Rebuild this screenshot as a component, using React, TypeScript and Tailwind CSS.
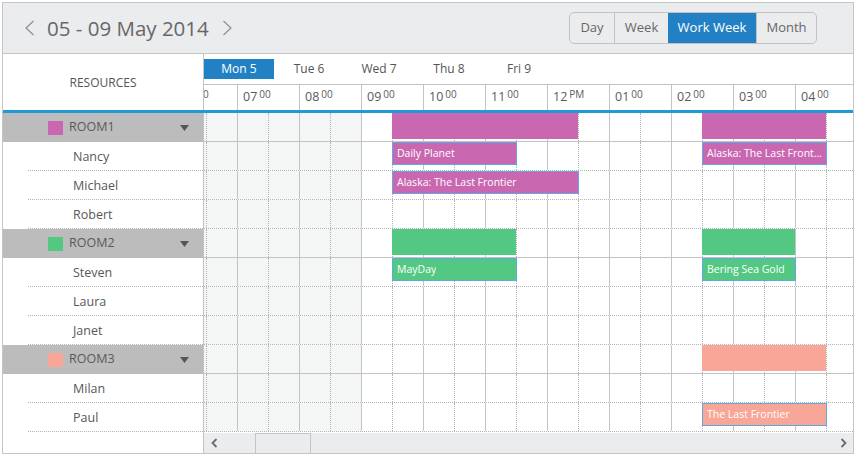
import React from "react";

type Ev = { left: number; width: number; title?: string };
type Row = { kind: "group" | "res"; name: string; color: string; events: Ev[] };

const PURPLE = "#c968b0";
const GREEN = "#53c883";
const SALMON = "#f7a697";

const rows: Row[] = [
  { kind: "group", name: "ROOM1", color: PURPLE, events: [{ left: 188, width: 186 }, { left: 498, width: 124 }] },
  { kind: "res", name: "Nancy", color: PURPLE, events: [{ left: 188, width: 125, title: "Daily Planet" }, { left: 498, width: 125, title: "Alaska: The Last Frontier" }] },
  { kind: "res", name: "Michael", color: PURPLE, events: [{ left: 188, width: 187, title: "Alaska: The Last Frontier" }] },
  { kind: "res", name: "Robert", color: PURPLE, events: [] },
  { kind: "group", name: "ROOM2", color: GREEN, events: [{ left: 188, width: 124 }, { left: 498, width: 93 }] },
  { kind: "res", name: "Steven", color: GREEN, events: [{ left: 188, width: 125, title: "MayDay" }, { left: 498, width: 94, title: "Bering Sea Gold" }] },
  { kind: "res", name: "Laura", color: GREEN, events: [] },
  { kind: "res", name: "Janet", color: GREEN, events: [] },
  { kind: "group", name: "ROOM3", color: SALMON, events: [{ left: 498, width: 124 }] },
  { kind: "res", name: "Milan", color: SALMON, events: [] },
  { kind: "res", name: "Paul", color: SALMON, events: [{ left: 498, width: 125, title: "The Last Frontier" }] },
];

const hours = [
  { h: "06", s: "00" },
  { h: "07", s: "00" },
  { h: "08", s: "00" },
  { h: "09", s: "00" },
  { h: "10", s: "00" },
  { h: "11", s: "00" },
  { h: "12", s: "PM" },
  { h: "01", s: "00" },
  { h: "02", s: "00" },
  { h: "03", s: "00" },
  { h: "04", s: "00" },
];

const days = ["Mon 5", "Tue 6", "Wed 7", "Thu 8", "Fri 9"];

function Chevron({ dir, size = "big" }: { dir: "l" | "r"; size?: "big" | "small" }) {
  if (size === "small") {
    return (
      <svg width="7" height="10" viewBox="0 0 7 10">
        <path d={dir === "l" ? "M5.5 1 L1.5 5 L5.5 9" : "M1.5 1 L5.5 5 L1.5 9"} fill="none" stroke="#6b6b6b" strokeWidth="1.8" />
      </svg>
    );
  }
  return (
    <svg width="11" height="16" viewBox="0 0 11 16">
      <path d={dir === "l" ? "M9.5 1 L2 8 L9.5 15" : "M1.5 1 L9 8 L1.5 15"} fill="none" stroke="#8e8e8e" strokeWidth="1.2" />
    </svg>
  );
}

function HourCell({ shaded }: { shaded: boolean }) {
  return (
    <div className={shaded ? "flex h-full w-[62px] shrink-0 bg-[#f4f6f5]" : "flex h-full w-[62px] shrink-0"}>
      <div className="h-full w-[31px] border-l border-[#c3c3c3]" />
      <div className="h-full w-[31px] border-l border-dotted border-[#b3b3b3]" />
    </div>
  );
}

function GridRow({ row }: { row: Row }) {
  return (
    <div
      className={
        row.kind === "group"
          ? "relative h-[29px] border-b border-[#c3c3c3]"
          : "relative h-[29px] border-b border-dotted border-[#b3b3b3]"
      }
    >
      <div className="-ml-[29px] flex h-full">
        {hours.map((_, i) => (
          <HourCell key={i} shaded={i < 3} />
        ))}
      </div>
      {row.events.map((ev, i) =>
        row.kind === "group" ? (
          <div
            key={i}
            className="absolute top-0 h-[26px]"
            style={{ left: ev.left, width: ev.width, background: row.color }}
          />
        ) : (
          <div
            key={i}
            className="absolute top-0 flex h-[23px] items-center truncate border border-[#5ea9e2] pl-[4px] pr-[3px] text-[10.5px] text-white"
            style={{ left: ev.left, width: ev.width, background: row.color }}
          >
            <span className="truncate">{ev.title}</span>
          </div>
        )
      )}
    </div>
  );
}

function ResourceRow({ row }: { row: Row }) {
  if (row.kind === "group") {
    return (
      <div className="flex h-[29px] items-center bg-[#bcbcbc] pl-[45px]">
        <div className="h-[14px] w-[15px]" style={{ background: row.color }} />
        <span className="ml-[6px] text-[12.5px] text-[#5a5a5a]">{row.name}</span>
        <svg className="ml-auto mr-[14px]" width="9" height="6" viewBox="0 0 9 6">
          <path d="M0 0 L9 0 L4.5 6 Z" fill="#555" />
        </svg>
      </div>
    );
  }
  return (
    <div className="ml-[25px] flex h-[29px] items-center border-b border-dotted border-[#b3b3b3] pl-[45px] pt-[2px] text-[12.5px] text-[#585858]">
      {row.name}
    </div>
  );
}

export default function App() {
  return (
    <div className="h-[457px] w-[857px] bg-white pl-[2px] pt-[2px] font-['Open_Sans',sans-serif]">
      <div className="flex h-[452px] w-[852px] flex-col overflow-hidden border border-[#c5c5c5]">
        {/* toolbar */}
        <div className="flex h-[51px] shrink-0 items-center border-b border-[#c5c5c5] bg-[#ebecee] pl-[21px]">
          <Chevron dir="l" />
          <span className="ml-[12px] text-[20.5px] text-[#676767]">05 - 09 May 2014</span>
          <span className="ml-[13px]">
            <Chevron dir="r" />
          </span>
          <div className="ml-auto mr-[36px] flex h-[32px] overflow-hidden rounded-[5px] border border-[#c2c2c2] text-[13px] text-[#666]">
            <div className="flex w-[44px] items-center justify-center">Day</div>
            <div className="flex w-[54px] items-center justify-center border-l border-[#c2c2c2]">Week</div>
            <div className="flex w-[88px] items-center justify-center bg-[#2281c5] text-white">Work Week</div>
            <div className="flex w-[60px] items-center justify-center border-l border-[#c2c2c2]">Month</div>
          </div>
        </div>

        {/* column headers */}
        <div className="flex h-[56px] shrink-0">
          <div className="flex w-[201px] shrink-0 items-center justify-center border-r border-[#c3c3c3] pt-[1px] text-[12px] text-[#555]">
            RESOURCES
          </div>
          <div className="flex min-w-0 flex-1 flex-col overflow-hidden">
            <div className="flex h-[31px] shrink-0 items-start border-b border-[#c3c3c3] text-[12px] text-[#555]">
              {days.map((d, i) => (
                <div
                  key={d}
                  className={
                    i === 0
                      ? "mt-[5px] flex h-[20px] w-[70px] items-center justify-center bg-[#2281c5] text-white"
                      : "mt-[5px] flex h-[20px] w-[70px] items-center justify-center"
                  }
                >
                  {d}
                </div>
              ))}
            </div>
            <div className="-ml-[29px] flex h-[25px] shrink-0">
              {hours.map((h) => (
                <div key={h.h} className="flex h-full w-[62px] shrink-0 items-start border-l border-[#c3c3c3] pl-[5px] pt-[6px] text-[#5a5a5a]">
                  <span className="text-[12.5px] leading-none">{h.h}</span>
                  <span className="-mt-[2px] ml-[2px] text-[10px] leading-none">{h.s}</span>
                </div>
              ))}
            </div>
          </div>
        </div>

        <div className="h-[3px] shrink-0 bg-[#1e9ad6]" />

        {/* body */}
        <div className="flex min-h-0 flex-1">
          <div className="w-[201px] shrink-0 border-r border-[#c3c3c3]">
            {rows.map((r) => (
              <ResourceRow key={r.name} row={r} />
            ))}
          </div>
          <div className="flex min-w-0 flex-1 flex-col overflow-hidden">
            {rows.map((r) => (
              <GridRow key={r.name} row={r} />
            ))}
            <div className="mt-[1px] flex h-[20px] items-center bg-[#ebecee]">
              <div className="flex w-[20px] justify-center">
                <Chevron dir="l" size="small" />
              </div>
              <div className="mt-[2px] ml-[31px] h-full w-[56px] self-end border-x border-t border-[#c5c5c5]" />
              <div className="ml-auto mr-[4px] flex w-[12px] justify-center">
                <Chevron dir="r" size="small" />
              </div>
            </div>
          </div>
        </div>
      </div>
    </div>
  );
}
